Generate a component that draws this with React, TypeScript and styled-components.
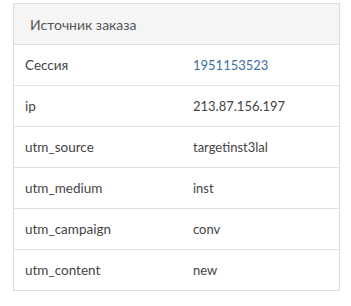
import React from 'react'
import styled, { createGlobalStyle } from 'styled-components'

const GlobalStyle = createGlobalStyle`
  body {
    margin: 0;
    background: #fff;
    font-family: Lato, 'Open Sans', sans-serif;
    color: #444;
  }
`

const Wrapper = styled.div`
  padding: 3px 0 0 13px;
`

const Table = styled.table`
  width: 327px;
  border-collapse: collapse;
  border: 1px solid #dcdcdc;
  font-size: 13.5px;
`

const HeadCell = styled.th`
  height: 40px;
  padding: 0 0 0 16px;
  background: #f5f5f5;
  text-align: left;
  font-weight: normal;
  color: #555;
  font-size: 14px;
  border-bottom: 1px solid #dcdcdc;
`

const Row = styled.tr`
  height: 41px;
  border-top: 1px solid #e0e0e0;
`

const Label = styled.td`
  width: 168px;
  padding: 0 0 0 11px;
`

const Value = styled.td<{ $link?: boolean }>`
  padding: 0;
  font-size: 13px;
  color: ${(props) => (props.$link ? '#3d6fa3' : '#444')};
`

const rows = [
  { label: 'Сессия', value: '1951153523', link: true },
  { label: 'ip', value: '213.87.156.197' },
  { label: 'utm_source', value: 'targetinst3lal' },
  { label: 'utm_medium', value: 'inst' },
  { label: 'utm_campaign', value: 'conv' },
  { label: 'utm_content', value: 'new' },
]

const App: React.FC = () => (
  <>
    <GlobalStyle />
    <Wrapper>
      <Table>
        <thead>
          <tr>
            <HeadCell colSpan={2}>Источник заказа</HeadCell>
          </tr>
        </thead>
        <tbody>
          {rows.map((row) => (
            <Row key={row.label}>
              <Label>{row.label}</Label>
              <Value $link={row.link}>{row.value}</Value>
            </Row>
          ))}
        </tbody>
      </Table>
    </Wrapper>
  </>
)

export default App
